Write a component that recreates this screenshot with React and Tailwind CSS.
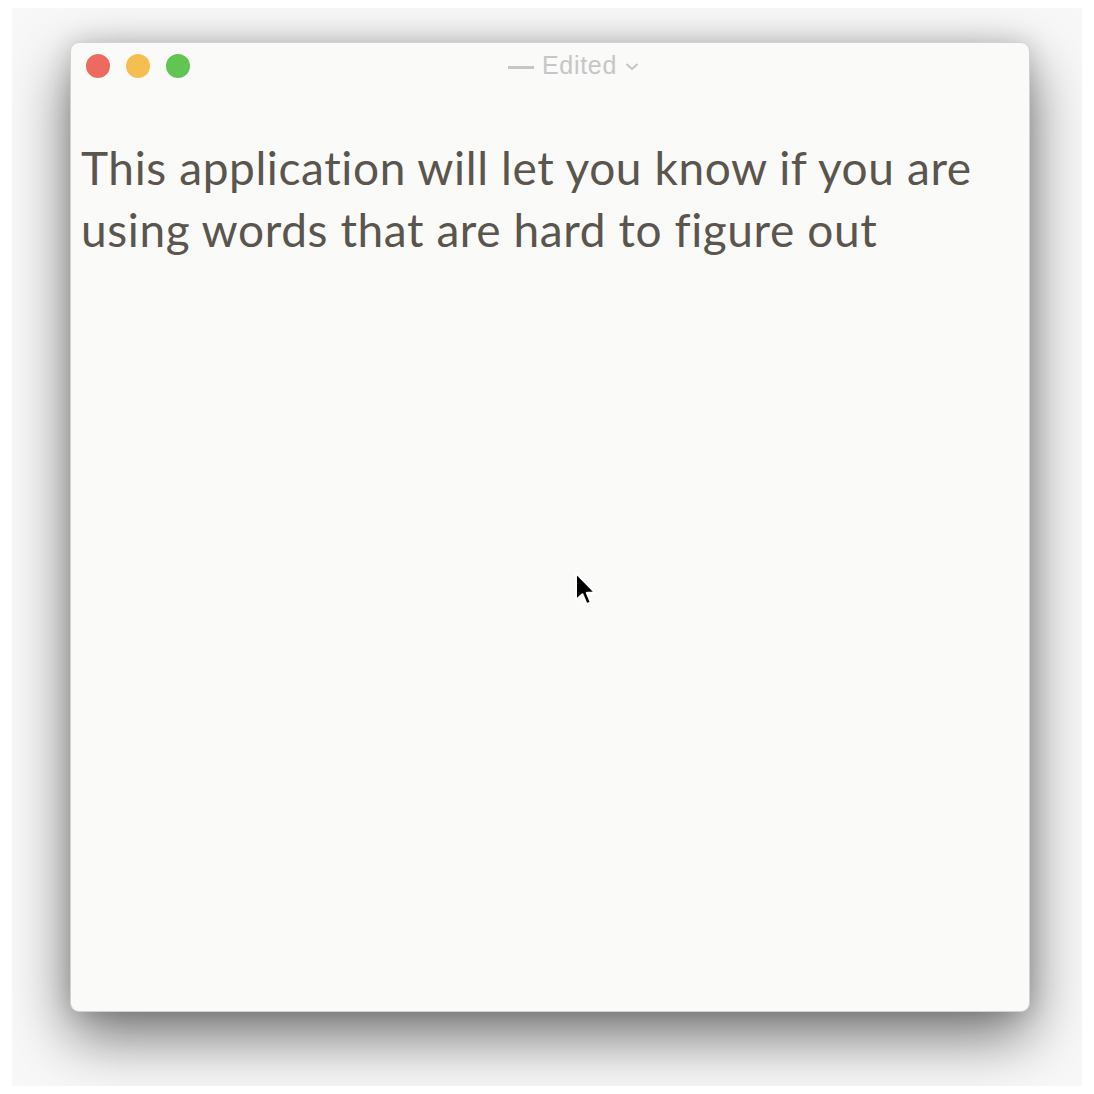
import React from "react";

function Cursor() {
  return (
    <svg width="24" height="36" viewBox="0 0 12 18" className="absolute left-[574px] top-[571px]">
      <path d="M1 1 L1 14.5 L4.2 11.6 L6.3 16.6 L8.4 15.7 L6.4 10.9 L10.6 10.9 Z" fill="#000" stroke="#fff" strokeWidth="1" strokeLinejoin="round" />
    </svg>
  );
}

export default function App() {
  return (
    <div className="relative w-[1094px] h-[1094px] bg-white overflow-hidden">
      <div className="absolute left-[12px] top-[8px] w-[1070px] h-[1078px] bg-[#f8f8f8] overflow-hidden">
        <div className="ml-[58px] mt-[34px] w-[960px] h-[970px] rounded-[9px] bg-[#fafaf9] border border-[#d2d2d2] shadow-[0_24px_60px_rgba(0,0,0,0.55),0_0_24px_rgba(0,0,0,0.14)] flex flex-col">
          <div className="relative h-[46px] flex items-center px-[15px] gap-[16px] shrink-0">
            <div className="w-[24px] h-[24px] rounded-full bg-[#ec6a5e]" />
            <div className="w-[24px] h-[24px] rounded-full bg-[#f5bf4f]" />
            <div className="w-[24px] h-[24px] rounded-full bg-[#61c554]" />
            <div className="absolute inset-0 flex items-center justify-center pl-[47px]">
              <div className="flex items-center gap-[8px] text-[#c6c6c6] text-[25px] tracking-[0.7px] font-['Liberation_Sans',sans-serif]">
                <span className="block w-[26px] h-[3px] bg-[#c6c6c6] mt-[2px]" />
                <span>Edited</span>
                <svg width="14" height="10" viewBox="0 0 14 10" className="mt-[2px]">
                  <path d="M2 2.5 L7 7 L12 2.5" fill="none" stroke="#c6c6c6" strokeWidth="2" strokeLinecap="round" strokeLinejoin="round" />
                </svg>
              </div>
            </div>
          </div>
          <div className="pl-[10px] pr-[20px] pt-[48px] text-[46px] leading-[62px] tracking-[0.6px] font-normal [font-variant-ligatures:none] text-[#5a554d] font-['Lato','Noto_Sans',sans-serif]">
            This application will let you know if you are using words that are hard to figure out
          </div>
        </div>
      </div>
      <Cursor />
    </div>
  );
}
